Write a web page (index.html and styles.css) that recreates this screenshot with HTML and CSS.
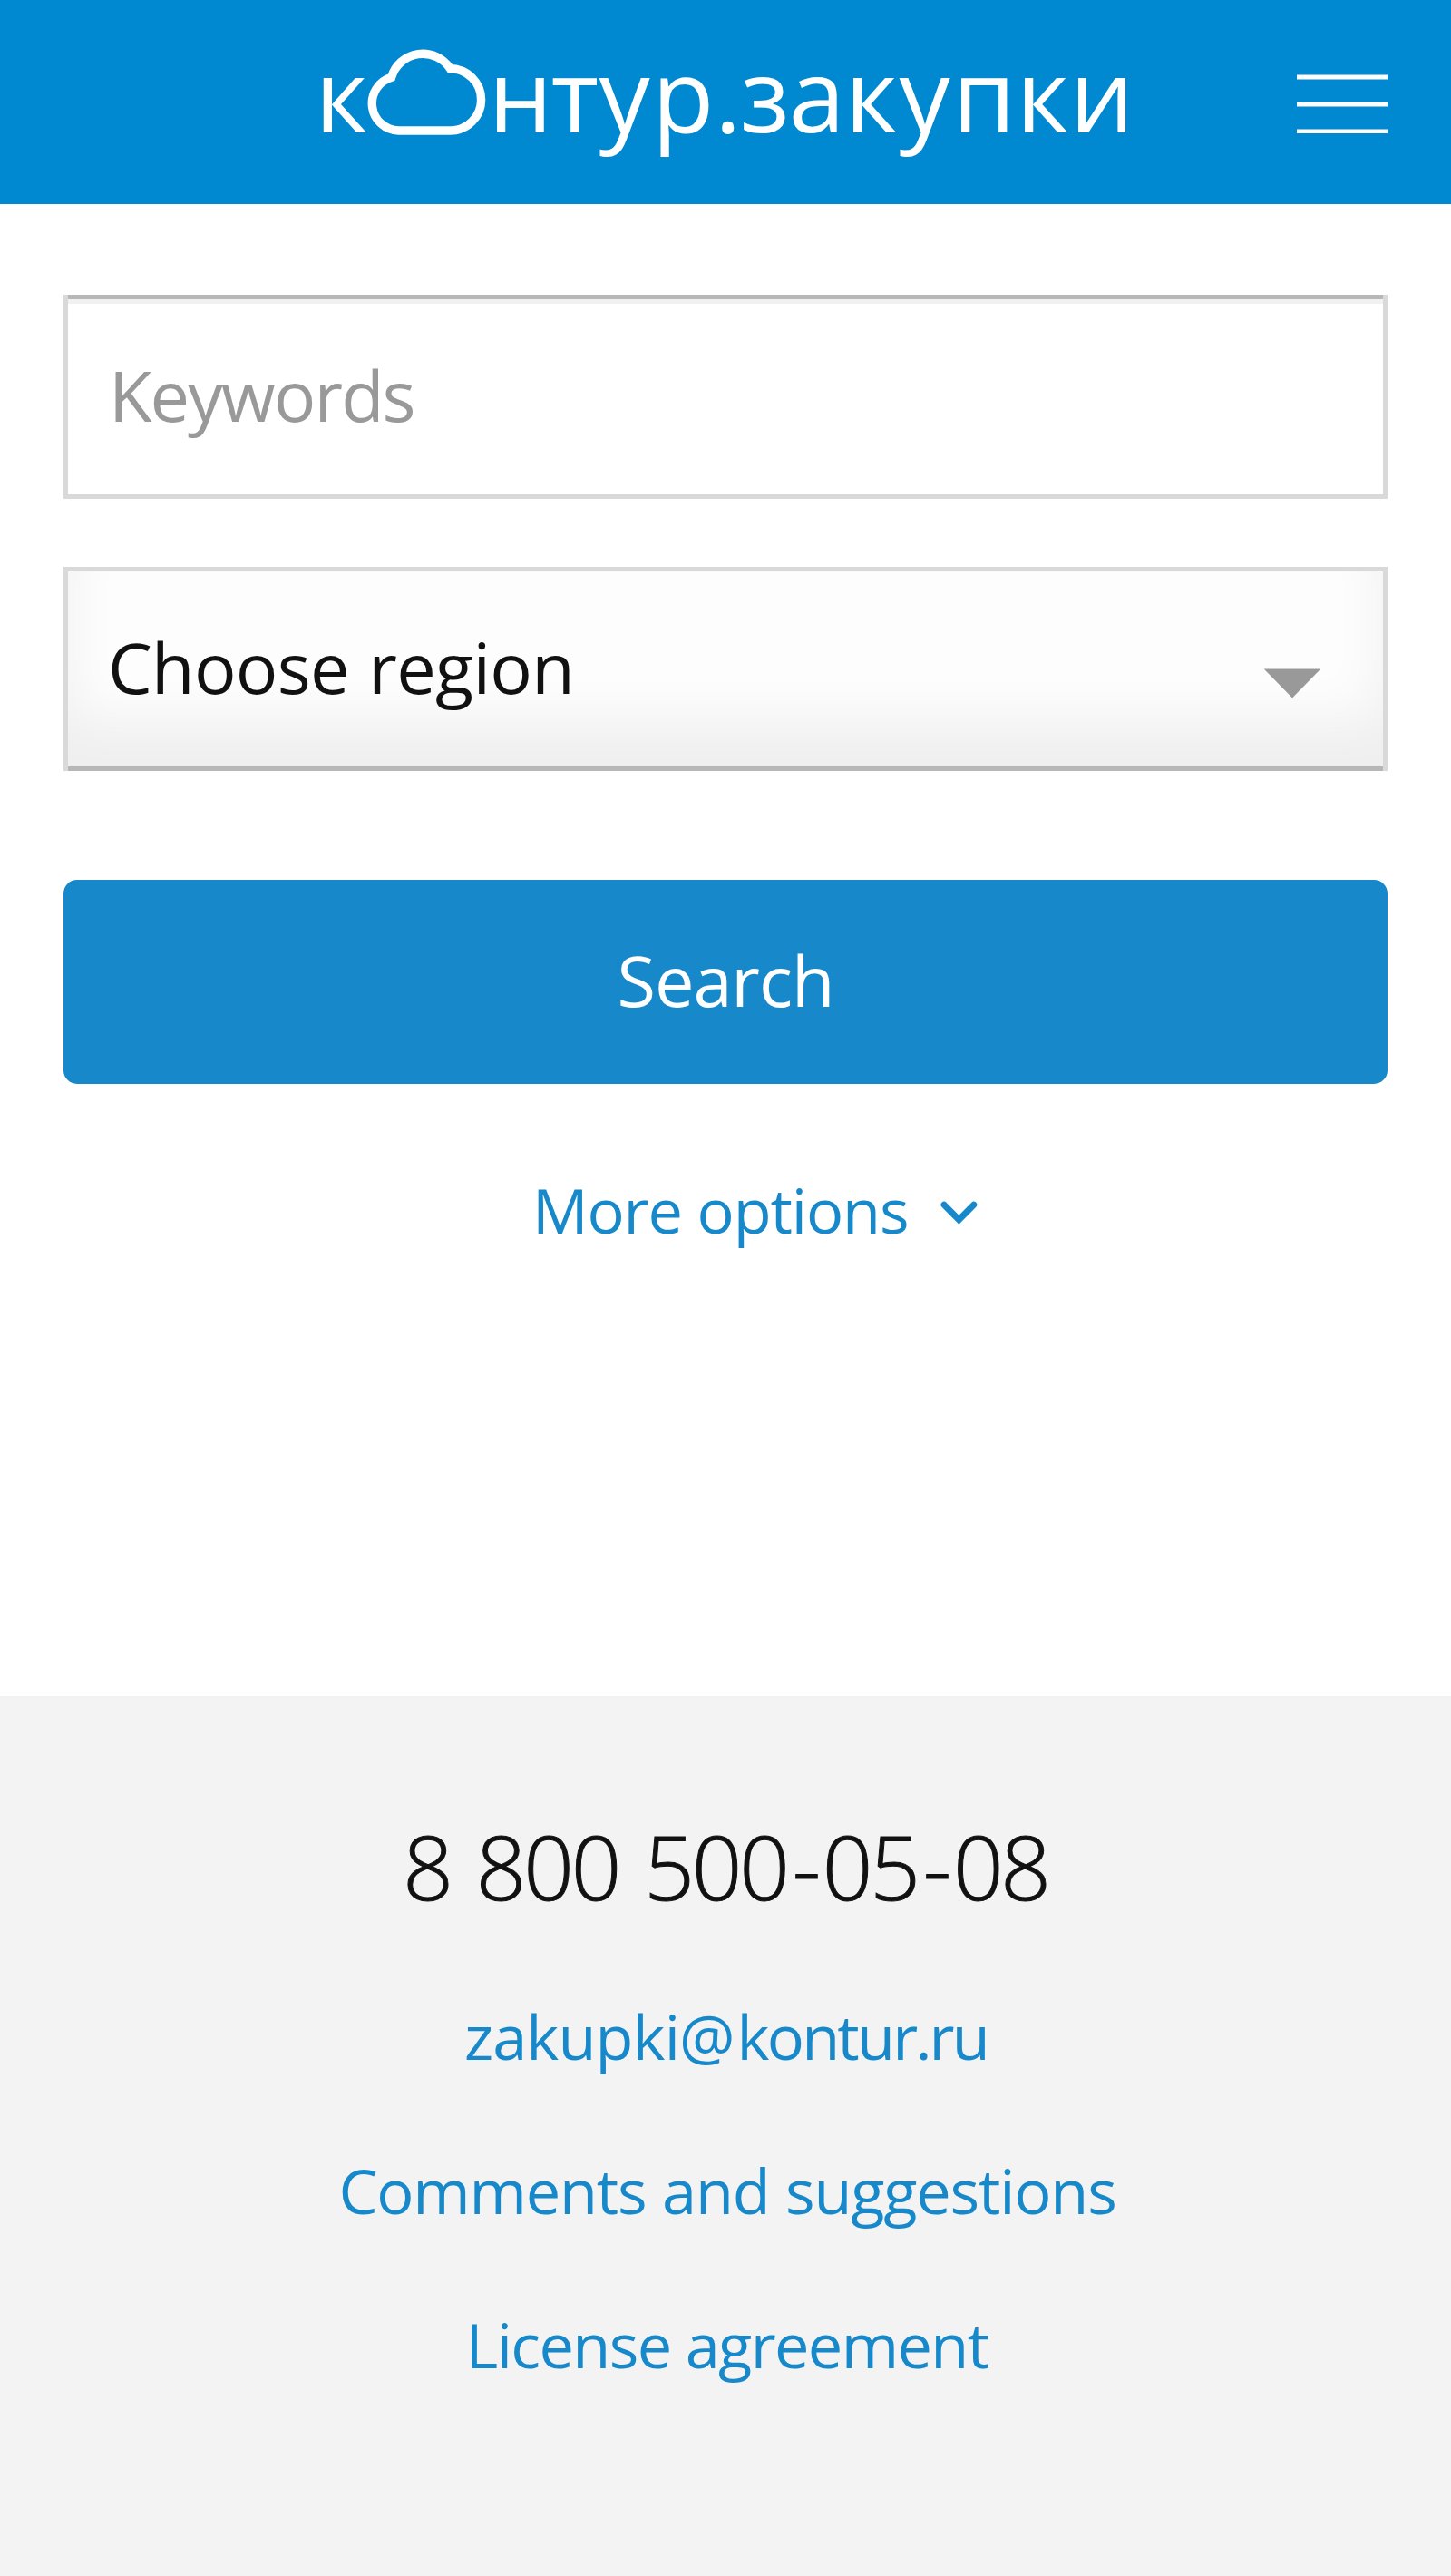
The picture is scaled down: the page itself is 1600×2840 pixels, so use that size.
FILE: index.html
```html
<!DOCTYPE html>
<html lang="en">
<head>
<meta charset="utf-8">
<title>Контур.Закупки</title>
<link rel="stylesheet" href="styles.css">
</head>
<body>
<header class="header">
  <svg class="logo" width="960" height="225" viewBox="320 0 960 225" role="img" aria-label="контур.закупки">
    <text class="logo-text" y="145.5" x="347.2">к</text>
    <path class="logo-cloud" d="M439.5 144A30 30 0 0 1 431.6 85.3A36 36 0 0 1 496.5 75.8A34.1 34.1 0 0 1 496.5 144Z"/>
    <text class="logo-text" y="145.5" x="538.4 607.5 660.5 719 788 816.5 869.5 931.5 991.6 1050.4 1120.4 1179.4">нтур.закупки</text>
  </svg>
  <button class="menu" aria-label="Menu">
    <svg width="100" height="65" viewBox="0 0 100 65" fill="#fff">
      <rect y="0.5" width="100" height="5"/>
      <rect y="30.5" width="100" height="5"/>
      <rect y="60.5" width="100" height="5"/>
    </svg>
  </button>
</header>
<main class="search">
  <div class="field"><span class="placeholder">Keywords</span></div>
  <div class="select">
    <span class="select-label">Choose region</span>
    <svg class="select-arrow" width="64" height="33" viewBox="0 0 64 33"><path d="M0.7 0.6H63.3L32 32.4Z" fill="#999"/></svg>
  </div>
  <button class="submit">Search</button>
  <a class="more"><span>More options</span><svg class="more-icon" width="42" height="27" viewBox="0 0 42 27"><path d="M4 4.3L20.4 20.7L36.8 4.3"/></svg></a>
</main>
<footer class="footer">
  <div class="phone">8 800 500<span class="dash">-</span>05<span class="dash">-</span>08</div>
  <nav class="links">
    <a class="link email">zakupki<span class="at">@</span><span class="domain">kontur.ru</span></a>
    <a class="link comments">Comments and suggestions</a>
    <a class="link license">License agreement</a>
  </nav>
</footer>
</body>
</html>
```
FILE: styles.css
```css
* { box-sizing: border-box; }

body {
  margin: 0;
  min-height: 2840px;
  display: flex;
  flex-direction: column;
  background: #fff;
  color: #111;
  font-family: "Open Sans", "Noto Sans", sans-serif;
}

button {
  margin: 0;
  padding: 0;
  border: 0;
  background: none;
  font: inherit;
}

.header {
  display: flex;
  justify-content: space-between;
  height: 225px;
  padding: 0 70px 0 320px;
  background: #0089d1;
}

.logo {
  display: block;
  overflow: visible;
}

.logo-text {
  fill: #fff;
  font-size: 112px;
}

.logo-cloud {
  fill: none;
  stroke: #fff;
  stroke-width: 9.4;
}

.menu {
  height: 65px;
  margin-top: 82px;
}

.menu svg { display: block; }

.search {
  flex: none;
  display: flex;
  flex-direction: column;
  height: 1645px;
  padding: 100px 70px 0;
}

.field,
.select {
  display: flex;
  align-items: center;
  height: 225px;
  border: 5px solid #d9d9d9;
  font-size: 77.5px;
  line-height: 100px;
}

.field {
  border-top: 0;
  padding-left: 45px;
  box-shadow: inset 0 5px #b7b7b7, inset 0 10px #f1f1f1;
}

.placeholder {
  color: #999;
  letter-spacing: -2px;
}

.select {
  justify-content: space-between;
  margin-top: 75px;
  padding: 0 68px 10px 44px;
  border-bottom: 0;
  background: #fdfdfd;
  box-shadow: inset 0 -5px #b7b7b7, inset 0 -55px 60px rgba(0, 0, 0, 0.06);
}

.select-label {
  letter-spacing: -0.7px;
  word-spacing: 2px;
}

.select-arrow { margin-top: 36px; }

.submit {
  height: 225px;
  margin-top: 120px;
  padding-bottom: 5px;
  border-radius: 15px;
  background: #1789cb;
  color: #fff;
  font-size: 77.5px;
  line-height: 100px;
  letter-spacing: -1.1px;
}

.more {
  display: flex;
  align-items: center;
  height: 80px;
  margin: 99px 0 0 517px;
  color: #1789cb;
  font-size: 68.5px;
  line-height: 80px;
  letter-spacing: -1.1px;
}

.more-icon {
  margin: 7px 0 0 35px;
  fill: none;
  stroke: currentColor;
  stroke-width: 7;
  stroke-linecap: round;
}

.footer {
  flex: 1;
  display: flex;
  flex-direction: column;
  align-items: center;
  padding-top: 128px;
  background: #f3f3f3;
}

.phone {
  font-size: 97.5px;
  font-weight: 300;
  line-height: 120px;
  letter-spacing: -3.2px;
  word-spacing: 6px;
  -webkit-text-stroke: 1px currentColor;
}

.dash { margin: 0 5px 0 6px; }

.links {
  display: flex;
  flex-direction: column;
  align-items: center;
  gap: 70px;
  margin-top: 77px;
}

.link {
  color: #1789cb;
  font-size: 68.5px;
  line-height: 100px;
}

.email {
  padding-left: 1px;
  letter-spacing: -0.9px;
}

.at { margin-right: 3px; }

.domain { letter-spacing: -2.8px; }

.comments {
  padding-left: 4px;
  letter-spacing: -1.2px;
  word-spacing: 1px;
}

.license {
  padding-left: 3px;
  letter-spacing: -1.64px;
}
```
